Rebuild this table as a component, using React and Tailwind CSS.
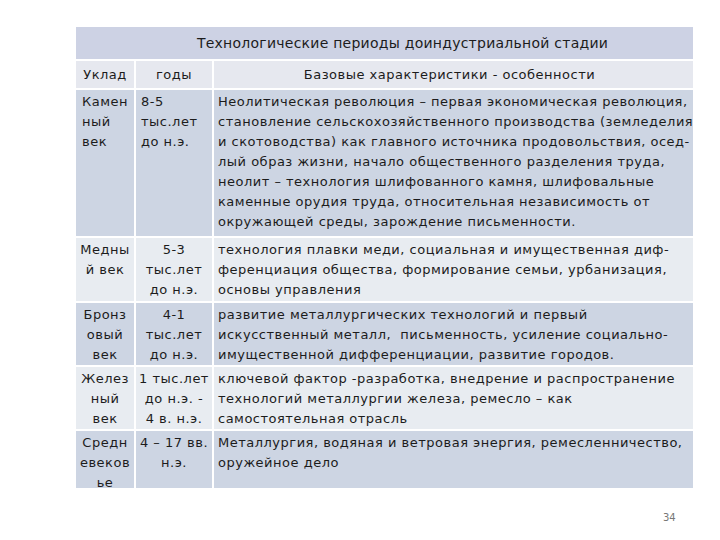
const rows = [
  {
    name: ['Камен', 'ный', 'век'],
    years: ['8-5', 'тыс.лет', 'до н.э.'],
    text: [
      'Неолитическая революция – первая экономическая революция,',
      'становление сельскохозяйственного производства (земледелия',
      'и скотоводства) как главного источника продовольствия, осед-',
      'лый образ жизни, начало общественного разделения труда,',
      'неолит – технология шлифованного камня, шлифовальные',
      'каменные орудия труда, относительная независимость от',
      'окружающей среды, зарождение письменности.',
    ],
    height: 'h-[146px]',
    bg: 'bg-[#cdd5e3]',
    left: true,
  },
  {
    name: ['Медны', 'й век'],
    years: ['5-3', 'тыс.лет', 'до н.э.'],
    text: [
      'технология плавки меди, социальная и имущественная диф-',
      'ференциация общества, формирование семьи, урбанизация,',
      'основы управления',
    ],
    height: 'h-[63px]',
    bg: 'bg-[#e8ecf1]',
  },
  {
    name: ['Бронз', 'овый', 'век'],
    years: ['4-1', 'тыс.лет', 'до н.э.'],
    text: [
      'развитие металлургических технологий и первый',
      'искусственный металл,  письменность, усиление социально-',
      'имущественной дифференциации, развитие городов.',
    ],
    height: 'h-[62px]',
    bg: 'bg-[#cdd5e3]',
  },
  {
    name: ['Желез', 'ный', 'век'],
    years: ['1 тыс.лет', 'до н.э. -', '4 в. н.э.'],
    text: [
      'ключевой фактор -разработка, внедрение и распространение',
      'технологий металлургии железа, ремесло – как',
      'самостоятельная отрасль',
    ],
    height: 'h-[62px]',
    bg: 'bg-[#e8ecf1]',
  },
  {
    name: ['Средн', 'евеков', 'ье'],
    years: ['4 – 17 вв.', 'н.э.'],
    text: [
      'Металлургия, водяная и ветровая энергия, ремесленничество,',
      'оружейное дело',
    ],
    height: 'h-[57px]',
    bg: 'bg-[#cdd5e3]',
  },
]

function Lines({ lines }) {
  return lines.map((l) => (
    <div key={l} className="whitespace-pre">
      {l}
    </div>
  ))
}

export default function App() {
  return (
    <div className="relative w-[720px] h-[540px] bg-white text-[#1c1c1c] font-['DejaVu_Sans',sans-serif] text-[13px] leading-[20px] tracking-[0.5px]">
      <div className="absolute left-[76px] top-[27px] w-[617px] bg-white">
        {/* Title */}
        <div className="h-[32px] bg-[#cdd2e4] flex items-center justify-center text-[14px] tracking-[0.25px] pl-[36px]">
          Технологические периоды доиндустриальной стадии
        </div>

        <div className="grid grid-cols-[58px_76px_479px] gap-[2px] mt-[2px]">
          {/* Header */}
          <div className="h-[27px] bg-[#e6e8ef] flex items-center justify-center">Уклад</div>
          <div className="h-[27px] bg-[#e6e8ef] flex items-center justify-center">годы</div>
          <div className="h-[27px] bg-[#e6e8ef] flex items-center justify-center pr-[8px]">
            Базовые характеристики - особенности
          </div>

          {rows.map((r) => (
            <Row key={r.name.join('')} r={r} />
          ))}
        </div>
      </div>

      <div className="absolute left-[663px] top-[508px] text-[10px] tracking-normal text-[#777]">34</div>
    </div>
  )
}

function Row({ r }) {
  const align = r.left ? 'text-left pl-[6px]' : 'text-center'
  return (
    <>
      <div className={`${r.height} ${r.bg} pt-[2px] ${align}`}>
        <Lines lines={r.name} />
      </div>
      <div className={`${r.height} ${r.bg} pt-[2px] ${r.left ? 'text-left pl-[5px]' : 'text-center'}`}>
        <Lines lines={r.years} />
      </div>
      <div className={`${r.height} ${r.bg} pt-[2px] pl-[4px]`}>
        <Lines lines={r.text} />
      </div>
    </>
  )
}
